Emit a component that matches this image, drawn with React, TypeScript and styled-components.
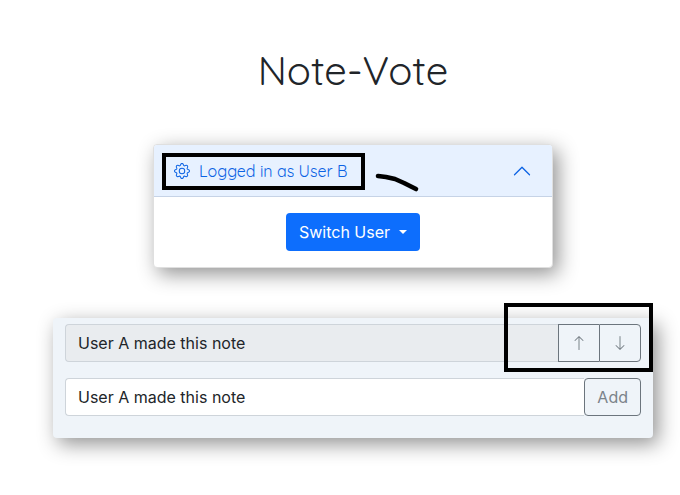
import React, { useState } from "react";
import styled, { createGlobalStyle } from "styled-components";
import { BsArrowDown, BsArrowUp, BsChevronDown, BsChevronUp, BsGear } from "react-icons/bs";

const GlobalStyle = createGlobalStyle`
  *, *::before, *::after { box-sizing: border-box; }
  body {
    margin: 0;
    background: #fff;
    color: #212529;
    font: 400 16px/24px Inter, "Liberation Sans", sans-serif;
  }
  button, input { font: inherit; color: inherit; }
`;

const Page = styled.main`
  display: flex;
  flex-direction: column;
  align-items: center;
  padding: 46px 27px 56px 53px;
`;

const Title = styled.h1`
  margin: 0 0 50px;
  font: 400 40px/48px Quicksand, Lato, sans-serif;
`;

const Panel = styled.section`
  position: relative;
  border-radius: 4px;
  box-shadow: 5px 6px 20px rgba(0, 0, 0, 0.43);
`;

const UserCard = styled(Panel)`
  width: 100%;
  max-width: 400px;
  margin-bottom: 50px;
  border: 1px solid #dfdfdf;
  background: #fff;
`;

const CardHeader = styled.button`
  display: flex;
  align-items: center;
  width: 100%;
  height: 52px;
  padding: 0 20px;
  border: 0;
  border-bottom: 1px solid #c6d3e6;
  border-radius: 3px 3px 0 0;
  background: #e7f1ff;
  color: #0c63e4;
  font: 400 16px/24px Quicksand, Lato, sans-serif;
  cursor: pointer;
`;

const HeaderLabel = styled.span`
  flex: 1;
  margin-left: 9px;
  text-align: left;
`;

const CardBody = styled.div`
  display: flex;
  justify-content: center;
  padding: 16px 20px;
`;

const SwitchButton = styled.button`
  display: flex;
  align-items: center;
  gap: 9px;
  height: 38px;
  padding: 0 13px;
  border: 0;
  border-radius: 4px;
  background: #0d6efd;
  color: #fff;
  cursor: pointer;
`;

const Caret = styled.span`
  border: 4px solid transparent;
  border-top-color: #fff;
  border-bottom: 0;
`;

const NotesPanel = styled(Panel)`
  display: grid;
  gap: 16px;
  width: 100%;
  max-width: 600px;
  padding: 6px 12px 22px;
  background: #eff4f9;
`;

const NoteRow = styled.div`
  display: flex;
  height: 38px;
`;

const NoteInput = styled.input`
  flex: 1;
  min-width: 0;
  padding: 0 12px;
  border: 1px solid #ced4da;
  border-right: 0;
  border-radius: 4px 0 0 4px;
  background: #fff;
  outline: 0;
  &:read-only { background: #e9ecef; }
`;

const OutlineButton = styled.button<{ $place: "inner" | "end" | "alone" }>`
  display: flex;
  align-items: center;
  justify-content: center;
  padding: 0 12px;
  border: 1px solid #6c757d;
  border-right-width: ${(p) => (p.$place === "inner" ? 0 : 1)}px;
  border-radius: ${(p) => ({ inner: "0", end: "0 4px 4px 0", alone: "4px" })[p.$place]};
  background: transparent;
  color: #7b838a;
  cursor: pointer;
`;

const Highlight = styled.div<{ $area: "header" | "votes" }>`
  position: absolute;
  border: 4px solid #000;
  pointer-events: none;
  ${(p) =>
    p.$area === "header"
      ? "top: 8px; left: 8px; width: 203px; height: 37px;"
      : "top: -15px; right: 0; width: 149px; height: 69px;"}
`;

const PenStroke = styled.svg`
  position: absolute;
  top: 26px;
  left: 220px;
  pointer-events: none;
`;

export default function App() {
  const [open, setOpen] = useState(true);
  const [user, setUser] = useState("B");
  const [draft, setDraft] = useState("User A made this note");

  return (
    <>
      <GlobalStyle />
      <Page>
        <Title>Note-Vote</Title>
        <UserCard>
          <CardHeader type="button" aria-expanded={open} onClick={() => setOpen(!open)}>
            <BsGear size={16} />
            <HeaderLabel>Logged in as User {user}</HeaderLabel>
            {open ? <BsChevronUp size={20} /> : <BsChevronDown size={20} />}
          </CardHeader>
          {open && (
            <CardBody>
              <SwitchButton type="button" onClick={() => setUser(user === "A" ? "B" : "A")}>
                Switch User
                <Caret />
              </SwitchButton>
            </CardBody>
          )}
          <Highlight $area="header" />
          <PenStroke width="46" height="24" aria-hidden="true">
            <path
              d="M4 5 L12 6 L21 8 L30 12 L42 18"
              fill="none"
              stroke="#000"
              strokeWidth="4.6"
              strokeLinecap="round"
              strokeLinejoin="round"
            />
          </PenStroke>
        </UserCard>
        <NotesPanel>
          <NoteRow>
            <NoteInput aria-label="Note" value="User A made this note" readOnly />
            <OutlineButton type="button" $place="inner" aria-label="Vote up">
              <BsArrowUp size={16} />
            </OutlineButton>
            <OutlineButton type="button" $place="end" aria-label="Vote down">
              <BsArrowDown size={16} />
            </OutlineButton>
          </NoteRow>
          <NoteRow>
            <NoteInput
              aria-label="New note"
              value={draft}
              onChange={(e) => setDraft(e.target.value)}
            />
            <OutlineButton type="button" $place="alone">
              Add
            </OutlineButton>
          </NoteRow>
          <Highlight $area="votes" />
        </NotesPanel>
      </Page>
    </>
  );
}
